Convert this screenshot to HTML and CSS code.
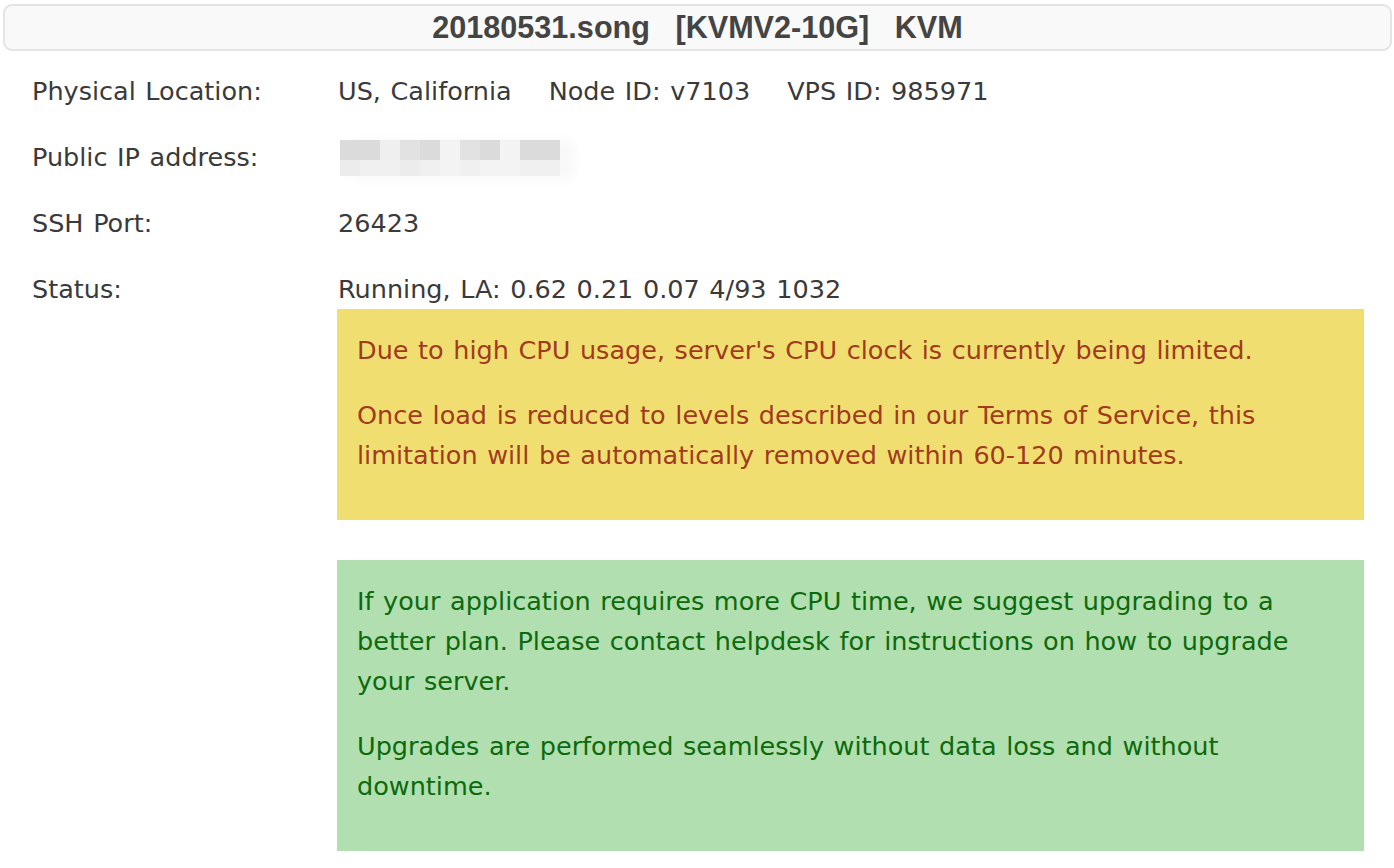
FILE: index.html
```html
<!DOCTYPE html>
<html>
<head>
<meta charset="utf-8">
<title>VPS</title>
<link rel="stylesheet" href="styles.css">
</head>
<body>
<div class="header"><span class="title">20180531.song   [KVMV2-10G]   KVM</span></div>
<div class="info">
  <div class="row">
    <div class="label">Physical Location:</div>
    <div class="value items"><span>US, California</span><span>Node ID: v7103</span><span>VPS ID: 985971</span></div>
  </div>
  <div class="row">
    <div class="label">Public IP address:</div>
    <div class="value">
      <div class="blur">
        <span class="c1"></span><span class="c1"></span><span class="c4"></span><span class="c2"></span><span class="c1"></span><span class="c5"></span><span class="c2"></span><span class="c1"></span><span class="c5"></span><span class="c1"></span><span class="c1"></span>
        <span class="d1"></span><span class="d2"></span><span class="d2"></span><span class="d1"></span><span class="d2"></span><span class="d3"></span><span class="d2"></span><span class="d3"></span><span class="d3"></span><span class="d2"></span><span class="d2"></span>
      </div>
    </div>
  </div>
  <div class="row">
    <div class="label">SSH Port:</div>
    <div class="value">26423</div>
  </div>
  <div class="row last">
    <div class="label">Status:</div>
    <div class="value">
      <div>Running, LA: 0.62 0.21 0.07 4/93 1032</div>
      <div class="notice warn">
        <p>Due to high CPU usage, server's CPU clock is currently being limited.</p>
        <p>Once load is reduced to levels described in our Terms of Service, this limitation will be automatically removed within 60-120 minutes.</p>
      </div>
      <div class="notice ok">
        <p>If your application requires more CPU time, we suggest upgrading to a better plan. Please contact helpdesk for instructions on how to upgrade your server.</p>
        <p>Upgrades are performed seamlessly without data loss and without downtime.</p>
      </div>
    </div>
  </div>
</div>
</body>
</html>
```

FILE: styles.css
```css
html, body {
  margin: 0;
  padding: 0;
  background: #ffffff;
}
body {
  font-family: "DejaVu Sans", Verdana, sans-serif;
  font-size: 25.5px;
  word-spacing: 1.5px;
  color: #3a3a3a;
}
.header {
  margin: 4px 2px 0 3px;
  height: 43px;
  border: 2px solid #e4e4e4;
  border-radius: 9px;
  background: #f9f9f9;
  display: flex;
  align-items: center;
  justify-content: center;
}
.title {
  font-family: "Liberation Sans", Arial, sans-serif;
  font-weight: bold;
  font-size: 30.6px;
  word-spacing: 0;
  color: #444444;
  white-space: pre;
}
.info {
  padding: 20px 30px 0 32px;
}
.row {
  display: grid;
  grid-template-columns: 306px 1fr;
  line-height: 40px;
  margin-bottom: 26px;
}
.row.last {
  margin-bottom: 0;
}
.items {
  display: flex;
  gap: 37px;
  white-space: nowrap;
}
.blur {
  display: grid;
  grid-template-columns: repeat(11, 20px);
  grid-template-rows: 20px 16px;
  margin: 3px 0 0 2px;
  box-shadow: 12px 2px 10px 2px #f9f9f9;
  width: 220px;
}
.blur span { display: block; }
.c1 { background: #dbdbdb; }
.c2 { background: #e2e2e2; }
.c4 { background: #efefef; }
.c5 { background: #f3f3f3; }
.d1 { background: #ececec; }
.d2 { background: #f0f0f0; }
.d3 { background: #f3f3f3; }
.notice {
  margin-left: -1px;
  padding: 21px 30px 20px 20px;
}
.notice p {
  margin: 0 0 25px 0;
}
.warn {
  background: #f0df70;
  color: #a23a1e;
  margin-bottom: 40px;
}
.ok {
  background: #b1dfb0;
  color: #0c6a0c;
}
```
